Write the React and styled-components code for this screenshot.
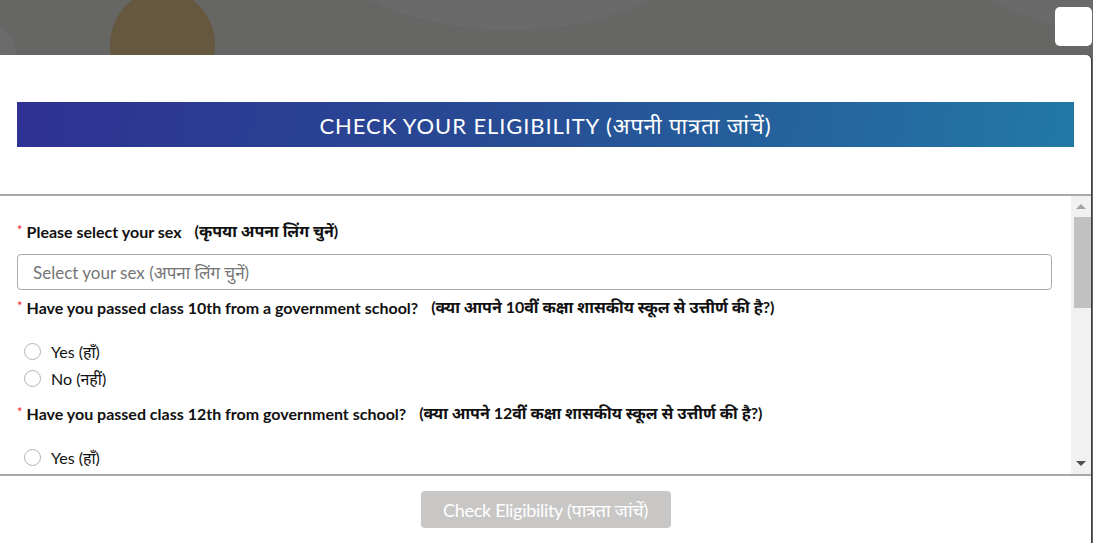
import styled, { createGlobalStyle } from "styled-components";

const GlobalStyle = createGlobalStyle`
  html, body {
    margin: 0;
    padding: 0;
    overflow: hidden;
  }
  body {
    font-family: Lato, "Noto Sans", "Noto Sans Devanagari", sans-serif;
    background: #666665;
  }
  * { box-sizing: border-box; }
`;

const Backdrop = styled.div`
  position: relative;
  width: 1093px;
  height: 543px;
  background: #666665;
  overflow: hidden;
  padding-top: 55px;
`;

// decorative bits of the page behind the overlay
const Blob = styled.div`
  position: absolute;
  border-radius: 50%;
  left: ${(p) => p.x}px;
  top: ${(p) => p.y}px;
  width: ${(p) => p.w}px;
  height: ${(p) => p.h}px;
  background: ${(p) => p.color};
`;

const CloseButton = styled.button`
  position: absolute;
  top: 7px;
  right: 1px;
  width: 37px;
  height: 39px;
  border: none;
  border-radius: 5px;
  background: #fff;
  cursor: pointer;
`;

const Modal = styled.div`
  position: relative;
  width: 1091px;
  height: 488px;
  background: #fff;
  border-radius: 0 5px 0 0;
  box-shadow: 1px 0 0 #3d3d3d;
  display: flex;
  flex-direction: column;
`;

const Header = styled.div`
  padding: 47px 17px;
  border-bottom: 2px solid #a9a9a9;
`;

const Banner = styled.h2`
  margin: 0;
  height: 45px;
  display: flex;
  align-items: center;
  justify-content: center;
  background: linear-gradient(100deg, #2e3192 0%, #284b94 45%, #2279a6 100%);
  color: #fff;
  font-size: 22px;
  font-weight: 400;
  letter-spacing: 0.9px;
`;

const Body = styled.div`
  height: 280px;
  display: flex;
  border-bottom: 2px solid #a9a9a9;
`;

const Content = styled.div`
  flex: 1;
  overflow: hidden;
  padding: 25px 19px 0 17px;
`;

const ScrollTrack = styled.div`
  width: 20px;
  background: #f1f1f1;
  display: flex;
  flex-direction: column;
  align-items: center;
`;

const Arrow = styled.div`
  height: 21px;
  width: 100%;
  display: flex;
  align-items: center;
  justify-content: center;

  &::before {
    content: "";
    border-left: 5px solid transparent;
    border-right: 5px solid transparent;
    ${(p) =>
      p.down
        ? "border-top: 5px solid #505050;"
        : "border-bottom: 5px solid #a3a3a3;"}
  }
`;

const Thumb = styled.div`
  width: 17px;
  margin-left: 2px;
  height: 91px;
  background: #c1c1c1;
`;

const Spacer = styled.div`
  flex: 1;
`;

const Label = styled.div`
  height: 20px;
  display: flex;
  align-items: center;
  font-size: 16px;
  font-weight: 700;
  color: #111;
  margin-bottom: ${(p) => p.gap}px;
  white-space: nowrap;
`;

const Required = styled.span`
  color: #f5222d;
  font-weight: 400;
  font-size: 13px;
  margin-right: 4px;
  align-self: flex-start;
  line-height: 18px;
`;

const Hindi = styled.span`
  margin-left: 13px;
`;

const Select = styled.div`
  height: 36px;
  border: 1px solid #a9a9a9;
  border-radius: 4px;
  display: flex;
  align-items: center;
  padding-left: 15px;
  font-size: 17px;
  color: #757575;
  margin-bottom: 7px;
`;

const RadioGroup = styled.div`
  display: flex;
  flex-direction: column;
  margin-bottom: 11px;
`;

const RadioRow = styled.label`
  height: 27px;
  display: flex;
  align-items: center;
  gap: 10px;
  padding-left: 7px;
  font-size: 16px;
  color: #111;
  cursor: pointer;
`;

const Circle = styled.span`
  width: 17px;
  height: 17px;
  border-radius: 50%;
  border: 1px solid #b3b3b3;
  background: #fff;
`;

const Footer = styled.div`
  flex: 1;
  display: flex;
  align-items: center;
  justify-content: center;
`;

const SubmitButton = styled.button`
  width: 250px;
  height: 37px;
  border: none;
  border-radius: 4px;
  background: #c8c7c6;
  color: #fff;
  font-family: Lato, "Noto Sans", "Noto Sans Devanagari", sans-serif;
  font-size: 18px;
  letter-spacing: -0.3px;
  cursor: not-allowed;
`;

const questions = [
  {
    en: "Have you passed class 10th from a government school?",
    hi: "(क्या आपने 10वीं कक्षा शासकीय स्कूल से उत्तीर्ण की है?)",
  },
  {
    en: "Have you passed class 12th from government school?",
    hi: "(क्या आपने 12वीं कक्षा शासकीय स्कूल से उत्तीर्ण की है?)",
  },
];

const options = ["Yes (हाँ)", "No (नहीं)"];

const App = () => {
  return (
    <>
      <GlobalStyle />
      <Backdrop>
        <Blob x={-25} y={28} w={42} h={60} color="#6b6b6b" />
        <Blob x={310} y={-180} w={400} h={210} color="#6a6a6a" />
        <Blob x={940} y={-160} w={500} h={200} color="#6a6a6a" />
        <Blob x={110} y={-10} w={105} h={110} color="#66573f" />
        <CloseButton aria-label="close" />
        <Modal>
          <Header>
            <Banner>CHECK YOUR ELIGIBILITY (अपनी पात्रता जांचें)</Banner>
          </Header>
          <Body>
            <Content>
              <Label gap={13}>
                <Required>*</Required>Please select your sex
                <Hindi>(कृपया अपना लिंग चुनें)</Hindi>
              </Label>
              <Select>Select your sex (अपना लिंग चुनें)</Select>
              {questions.map((q) => (
                <div key={q.en}>
                  <Label gap={21}>
                    <Required>*</Required>
                    {q.en}
                    <Hindi>{q.hi}</Hindi>
                  </Label>
                  <RadioGroup>
                    {options.map((o) => (
                      <RadioRow key={o}>
                        <Circle />
                        {o}
                      </RadioRow>
                    ))}
                  </RadioGroup>
                </div>
              ))}
            </Content>
            <ScrollTrack>
              <Arrow />
              <Thumb />
              <Spacer />
              <Arrow down />
            </ScrollTrack>
          </Body>
          <Footer>
            <SubmitButton disabled>Check Eligibility (पात्रता जांचें)</SubmitButton>
          </Footer>
        </Modal>
      </Backdrop>
    </>
  );
};

export default App;
